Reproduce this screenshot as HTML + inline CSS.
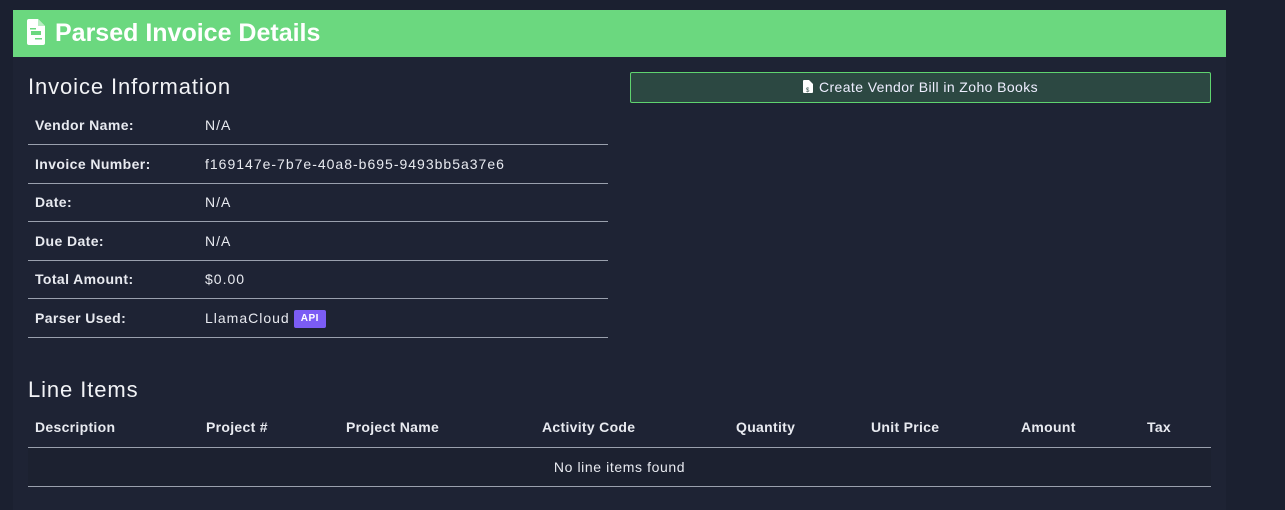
<!DOCTYPE html>
<html><head><style>
body{margin:0;width:1285px;height:505px;background:#1b2030;font-family:"Liberation Sans",sans-serif;color:#e8eaf0;overflow:hidden;position:relative}
.card{position:absolute;left:13px;top:10px;width:1213px;height:500px;background:#1e2334}
.hdr{position:absolute;left:13px;top:10px;width:1213px;height:47px;background:#6bd87f;color:#fff;font-size:25px;font-weight:bold;line-height:47px}
.hdr span{position:absolute;left:42px;top:0}
h2{position:absolute;margin:0;font-size:22px;font-weight:normal;color:#f2f3f6;letter-spacing:0.9px}
.row{position:absolute;left:28px;width:580px;height:38px;border-bottom:1px solid #9aa0ad;font-size:14px;line-height:38px}
.row b{position:absolute;left:7px;letter-spacing:0.4px}
.row i{font-style:normal;position:absolute;left:177px;letter-spacing:1px}
.btn{position:absolute;left:630px;top:72px;width:579px;height:29px;border:1px solid #5fd36f;border-radius:2px;background:#2c4842;color:#eef;font-size:14px;line-height:29px;text-align:center;letter-spacing:0.4px}
.th{position:absolute;top:419px;font-size:14px;font-weight:bold;letter-spacing:0.3px}
.api{display:inline-block;background:#7b5cf5;color:#fff;font-size:10px;font-weight:bold;padding:0 7px;line-height:18px;border-radius:2px;margin-left:4px;vertical-align:middle;letter-spacing:0.5px}
</style></head><body>
<div class="card"></div>
<div class="hdr"><svg style="position:absolute;left:14px;top:9px" width="18" height="26" viewBox="0 0 18 26"><path d="M0 2Q0 0 2 0H11L18 7V24Q18 26 16 26H2Q0 26 0 24Z" fill="#fff"/><path d="M11 0V7H18" fill="#b8ecc2"/><rect x="4" y="12" width="10" height="4" fill="#6bd87f"/><rect x="3" y="9" width="6" height="1.5" fill="#6bd87f"/><rect x="8" y="19" width="7" height="1.5" fill="#6bd87f"/></svg><span>Parsed Invoice Details</span></div>
<h2 style="left:28px;top:74px">Invoice Information</h2>
<div class="row" style="top:106px"><b>Vendor Name:</b><i>N/A</i></div>
<div class="row" style="top:145px"><b>Invoice Number:</b><i>f169147e-7b7e-40a8-b695-9493bb5a37e6</i></div>
<div class="row" style="top:183px"><b>Date:</b><i>N/A</i></div>
<div class="row" style="top:222px"><b>Due Date:</b><i>N/A</i></div>
<div class="row" style="top:260px"><b>Total Amount:</b><i>$0.00</i></div>
<div class="row" style="top:299px"><b>Parser Used:</b><i>LlamaCloud<span class="api">API</span></i></div>
<div class="btn"><svg width="10" height="13" viewBox="0 0 10 13" style="vertical-align:-1px;margin-right:6px"><path d="M0 1V12Q0 13 1 13H9Q10 13 10 12V4L6 0H1Q0 0 0 1Z" fill="#fff"/><text x="3" y="12" font-size="6" fill="#2c4842">$</text></svg>Create Vendor Bill in Zoho Books</div>
<h2 style="left:28px;top:377px">Line Items</h2>
<div class="th" style="left:35px">Description</div>
<div class="th" style="left:206px">Project #</div>
<div class="th" style="left:346px">Project Name</div>
<div class="th" style="left:542px">Activity Code</div>
<div class="th" style="left:736px">Quantity</div>
<div class="th" style="left:871px">Unit Price</div>
<div class="th" style="left:1021px">Amount</div>
<div class="th" style="left:1147px">Tax</div>
<div style="position:absolute;left:28px;top:447px;width:1183px;height:38px;border-top:1px solid #9aa0ad;border-bottom:1px solid #9aa0ad;background:#1c2130;text-align:center;line-height:38px;font-size:14px;letter-spacing:0.6px">No line items found</div>
</body></html>
